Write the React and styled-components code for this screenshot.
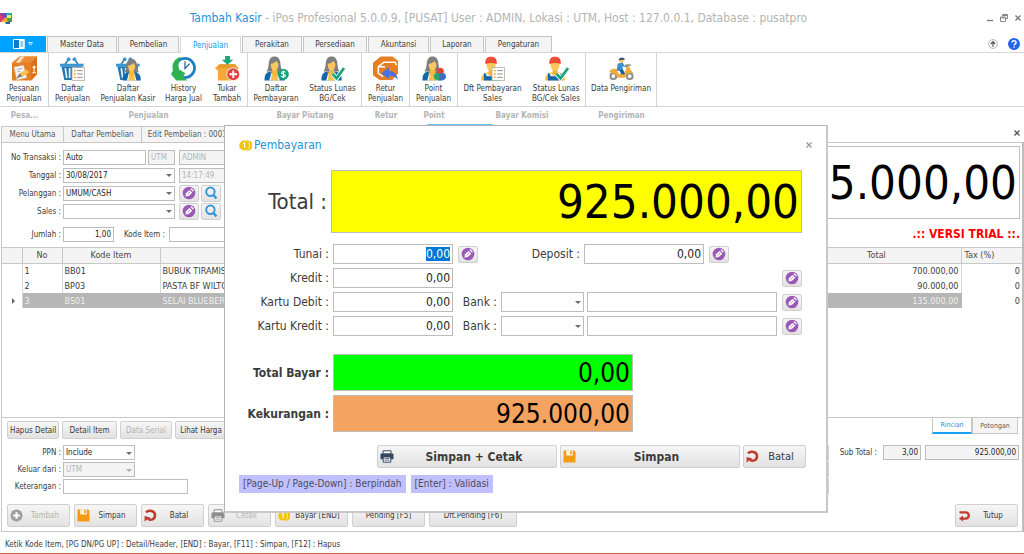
import React, { useEffect, useRef } from "react";
import styled, { createGlobalStyle } from "styled-components";

const GlobalStyle = createGlobalStyle`
    * {
        box-sizing: border-box;
    }
    body {
        margin: 0;
        background-color: #fff;
    }
    body, button, input, select {
        font-family: "DejaVu Sans Condensed", "Noto Sans", sans-serif;
        font-size: 8px;
        color: #3c3c3c;
    }
    input::selection {
        background-color: #0078d7;
        color: #fff;
    }
`;

const Window = styled.div`
    position: relative;
    display: flex;
    flex-direction: column;
    min-height: 100vh;
    border-bottom: 1px solid #cf6a50;
`;

/* title bar */
const TitleBar = styled.header`
    display: flex;
    align-items: center;
    height: 36px;
    & h1 {
        flex: 1;
        margin: 0;
        font-size: 12px;
        font-weight: normal;
        text-align: center;
        color: #b4b4b4;
    }
    & h1 b {
        font-weight: normal;
        color: #1b95dc;
    }
`;
const WindowButtons = styled.div`
    display: flex;
    gap: 4px;
    padding-right: 1px;
`;
const PlainButton = styled.button`
    display: flex;
    align-items: center;
    justify-content: center;
    width: 10px;
    height: 10px;
    padding: 0;
    border: 0;
    background: none;
    & svg {
        flex: none;
    }
`;

/* ribbon */
const RibbonTabs = styled.nav`
    display: flex;
    gap: 1px;
    height: 16px;
`;
const FileButton = styled.button`
    display: flex;
    align-items: center;
    justify-content: center;
    gap: 3px;
    width: 46px;
    padding: 0;
    border: 0;
    background-color: #00a2ff;
`;
const RibbonTab = styled.button`
    position: relative;
    z-index: 1;
    width: ${(p) => p.$w}px;
    height: ${(p) => (p.$active ? 17 : 16)}px;
    padding: 0;
    border: 1px solid ${(p) => (p.$active ? "#d8d8d8" : "#c4c4c4")};
    border-bottom: 0;
    background-color: ${(p) => (p.$active ? "#fff" : "#f4f4f4")};
    color: ${(p) => (p.$active ? "#1b95dc" : "#3c3c3c")};
`;
const RibbonTools = styled.div`
    display: flex;
    align-items: center;
    gap: 11px;
    margin-left: auto;
    padding-right: 5px;
`;
const Ribbon = styled.div`
    display: flex;
    height: 72px;
`;
const RibbonGroup = styled.section`
    & h2 {
        margin: 0;
        font-size: 8px;
        line-height: 18px;
        text-align: center;
        color: #b4b4b4;
    }
`;
const RibbonItems = styled.div`
    display: flex;
    height: 55px;
    padding-top: 3px;
    border: solid #d4d4d4;
    border-width: 1px 1px 1px 0;
`;
const RibbonRest = styled.div`
    flex: 1;
    height: 55px;
    border: solid #d4d4d4;
    border-width: 1px 0;
`;
const RibbonItem = styled.button`
    display: flex;
    flex-direction: column;
    align-items: center;
    width: ${(p) => p.$w}px;
    padding: 0;
    border: 0;
    background: none;
    line-height: 10px;
    white-space: pre;
    & svg {
        width: 25px;
        height: 25px;
        margin-bottom: 3px;
    }
`;

/* opened documents */
const DocTabs = styled.nav`
    display: flex;
    align-items: flex-end;
    height: 18px;
    padding-left: 1px;
    & > button:last-child {
        align-self: center;
        margin: 0 2px 0 auto;
    }
`;
const DocTab = styled.button`
    width: ${(p) => p.$w}px;
    height: ${(p) => (p.$active ? 18 : 16)}px;
    margin-right: -1px;
    padding: 0;
    border: 1px solid #c8c8c8;
    border-bottom: 0;
    ${(p) => p.$active && "border-top: 2px solid #5fbcf5;"}
    background-color: ${(p) => (p.$active ? "#fff" : "#f4f4f4")};
    color: #5a5a5a;
`;
const Page = styled.main`
    flex: 1;
    display: flex;
    flex-direction: column;
    margin-left: 1px;
    border: 1px solid #c8c8c8;
    border-right: 2px solid #bdbdbd;
`;
const PageTop = styled.div`
    display: flex;
    justify-content: space-between;
    height: 104px;
`;
const Fields = styled.div`
    display: flex;
    flex-direction: column;
    padding-top: ${(p) => p.$top || 0}px;
`;
const FieldRow = styled.div`
    display: flex;
    align-items: center;
    gap: 2px;
    height: ${(p) => p.$h || 18}px;
    margin-top: ${(p) => p.$top || 0}px;
    & > label:first-child {
        width: ${(p) => p.$label || 59}px;
        text-align: right;
        white-space: nowrap;
    }
`;
const TextBox = styled.input`
    width: ${(p) => p.$w}px;
    min-width: 0;
    height: ${(p) => p.$h || 15}px;
    margin-left: ${(p) => p.$left || 0}px;
    padding: 0 2px;
    border: 1px solid #bdbdbd;
    border-radius: 0;
    outline: 0;
    background-color: ${(p) => p.$bg || "#fff"};
    font-size: ${(p) => p.$size || 8}px;
    text-align: ${(p) => p.$align || "left"};
    color: ${(p) => p.$color || "#1e1e1e"};
`;
const SelectWrap = styled.span`
    position: relative;
    display: inline-flex;
    width: ${(p) => p.$w}px;
    height: ${(p) => p.$h || 15}px;
    &::after {
        content: "";
        position: absolute;
        right: 3px;
        top: 50%;
        margin-top: -1px;
        border: 3px solid transparent;
        border-top-color: ${(p) => (p.$off ? "#b0b0b0" : "#6e6e6e")};
        border-bottom: 0;
    }
    & select {
        width: 100%;
        padding: 0 2px;
        border: 1px solid #bdbdbd;
        border-radius: 0;
        appearance: none;
        background-color: ${(p) => (p.$off ? "#f4f4f4" : "#fff")};
        color: ${(p) => (p.$off ? "#b4b4b4" : "#1e1e1e")};
        opacity: 1;
    }
`;
const Button = styled.button`
    display: flex;
    align-items: center;
    width: ${(p) => p.$w}px;
    height: ${(p) => p.$h}px;
    padding: 0 2px;
    border: 1px solid #d0d0d0;
    border-radius: 2px;
    background: linear-gradient(#f6f6f6, #e2e2e2);
    font-size: ${(p) => p.$size || 8}px;
    font-weight: ${(p) => (p.$bold ? "bold" : "normal")};
    color: #3c3c3c;
    white-space: nowrap;
    & svg {
        flex: none;
    }
    & span {
        flex: 1;
        text-align: center;
    }
    &:disabled {
        color: #b4b4b4;
    }
`;
const BigTotal = styled.div`
    display: flex;
    flex-direction: column;
    align-items: flex-end;
    padding: 3px 2px 0 0;
    & strong {
        margin-top: 8px;
        font-size: 12px;
        color: #f00;
    }
`;

/* item table */
const TableBox = styled.div`
    flex: 1;
    min-height: 170px;
    border: solid #c8c8c8;
    border-width: 1px 0;
`;
const ItemTable = styled.table`
    width: 100%;
    table-layout: fixed;
    border-collapse: collapse;
    font-size: 9px;
    & th {
        height: 15px;
        padding: 0;
        border-right: 1px solid #c8c8c8;
        border-bottom: 1px solid #c8c8c8;
        background-color: #f4f4f4;
        font-weight: normal;
        color: #4a4a4a;
    }
    & th:last-child {
        padding-left: 3px;
        border-right: 0;
        text-align: left;
    }
    & td {
        height: 15px;
        padding: 0 2px;
        border-right: 1px solid #d8d8d8;
        overflow: hidden;
        white-space: nowrap;
    }
    & td:nth-last-child(-n + 2) {
        text-align: right;
    }
    & td:last-child {
        padding: 0 2px 0 0;
        border-right: 0;
    }
    & tr[aria-selected="true"] td:not(:first-child):not(:last-child) {
        background-color: #b6b6b6;
        border-right-color: #b6b6b6;
        color: #f0f0f0;
    }
`;

/* page footer */
const ButtonRow = styled.div`
    display: flex;
    gap: ${(p) => p.$gap || 3}px;
    padding: 0 4px 0 5px;
    & > :last-child {
        margin-left: auto;
    }
`;
const FooterTabs = styled.div`
    display: flex;
    align-self: flex-start;
`;
const FooterTab = styled.button`
    width: ${(p) => p.$w}px;
    height: 16px;
    padding: 0;
    border: solid #c8c8c8;
    border-width: 0 1px 1px;
    ${(p) => p.$active && "border-bottom: 2px solid #1ba1f2;"}
    background-color: ${(p) => (p.$active ? "#fff" : "#f4f4f4")};
    font-size: 7px;
    color: ${(p) => (p.$active ? "#1b95dc" : "#5a5a5a")};
`;
const PageBottom = styled.div`
    display: flex;
    justify-content: space-between;
    margin: 5px 0 9px;
`;
const SideTotals = styled.div`
    display: flex;
    gap: 10px;
    padding-right: 3px;
`;
const SideButtons = styled.div`
    display: flex;
    flex-direction: column;
`;
const StatusBar = styled.footer`
    height: 21px;
    padding-left: 5px;
    line-height: 25px;
`;

/* payment dialog */
const Dialog = styled.div`
    position: absolute;
    left: 224px;
    top: 125px;
    z-index: 2;
    width: 604px;
    padding: 0 24px 18px 14px;
    border: 1px solid #b4b4b4;
    border-right: 2px solid #c8c8c8;
    border-bottom: 2px solid #c8c8c8;
    background-color: #fff;
`;
const DialogTitle = styled.div`
    display: flex;
    align-items: center;
    gap: 2px;
    height: 38px;
    & h2 {
        flex: 1;
        margin: 0;
        font-size: 12px;
        font-weight: normal;
        color: #1b95dc;
    }
    & button {
        margin-right: -12px;
    }
`;
const PayRow = styled.div`
    display: flex;
    align-items: center;
    height: ${(p) => p.$h || 20}px;
    margin-top: ${(p) => p.$top || 4}px;
    font-size: 12px;
    & > label:first-child {
        flex: none;
        width: ${(p) => (p.$total ? 88 : 90)}px;
        margin-right: 4px;
        font-size: ${(p) => (p.$total ? 22 : 12)}px;
        font-weight: ${(p) => (p.$bold ? "bold" : "normal")};
        text-align: right;
        white-space: nowrap;
    }
    & > input {
        flex: ${(p) => (p.$total ? 1 : "none")};
    }
    & > button {
        margin-left: ${(p) => (p.$push ? "auto" : "5px")};
    }
`;
const PayLabel = styled.label`
    width: ${(p) => p.$w}px;
    margin-right: ${(p) => p.$right || 4}px;
    text-align: right;
`;
const DialogButtons = styled.div`
    display: flex;
    justify-content: flex-end;
    gap: 3px;
    margin: 13px -4px 0 0;
`;
const Hints = styled.div`
    display: flex;
    gap: 5px;
    margin-top: 7px;
    & span {
        padding: 0 4px;
        background-color: #c0c0ff;
        font-size: 10px;
        line-height: 18px;
        color: #4c4c5c;
    }
`;

/* small icons */
const Cross = ({ size = 6, color = "#777" }) => (
    <svg width={size} height={size} viewBox="0 0 6 6" aria-hidden="true">
        <path d="M.5.5l5 5M5.5.5l-5 5" stroke={color} strokeWidth="1.3" />
    </svg>
);
const Logo = () => (
    <svg width="12" height="11" viewBox="0 0 12 11" aria-hidden="true">
        <path d="M0 0h12v9H0z" fill="#8b3fa8" />
        <path d="M6 0h6v4l-5 3z" fill="#19a8c4" />
        <path d="M0 1l5 5-2 3H0z" fill="#e23a77" />
        <path d="M1 9l5-5 3 5z" fill="#f5b31c" />
        <path d="M7 6l5-3v5l-4 1z" fill="#4a9c4e" />
        <path d="M7 2h4v3H7z" fill="#e6f26a" />
        <path d="M5 9h5v2H6z" fill="#2d5ca8" />
    </svg>
);
const Tag = () => (
    <svg width="14" height="14" viewBox="0 0 14 14" aria-hidden="true">
        <circle cx="7" cy="7" r="6.3" fill="#9b59b6" />
        <path d="M3.4 10.4L4 7.2l3.4-3.3 2.8 2.8-3.4 3.4z" fill="#fff" />
        <path d="M8.3 3l1.2-.8L11.800 4.500l-.8 1.200z" fill="#fff" />
        <path d="M5.400 8.500L8 6" stroke="#9b59b6" strokeWidth=".7" />
    </svg>
);
const Magnifier = () => (
    <svg width="14" height="14" viewBox="0 0 14 14" aria-hidden="true">
        <circle cx="6.4" cy="5.8" r="4.2" fill="none" stroke="#3498db" strokeWidth="2" />
        <path d="M9.4 9l3 3.4" stroke="#3498db" strokeWidth="2.4" />
    </svg>
);
const Coins = ({ size = 12 }) => (
    <svg width={size} height={size} viewBox="0 0 12 12" aria-hidden="true">
        <path d="M7 1.5a4.6 4.6 0 010 9M9 2a4.2 4.2 0 010 8" fill="none" stroke="#f1c40f" strokeWidth="1.2" />
        <circle cx="4.8" cy="6" r="4.6" fill="#f1c40f" />
        <path d="M3.7 4.4l1.4-.7v4.6" fill="none" stroke="#fff" strokeWidth="1.1" />
    </svg>
);
const Disk = () => (
    <svg width="13" height="13" viewBox="0 0 13 13" aria-hidden="true">
        <path d="M.5.5h10.700l1.300 1.300v10.700H.5z" fill="#f39c12" />
        <path d="M3.2.5h6.600v5H3.200z" fill="#fdf3e0" />
        <path d="M7.200 1.300h1.700v3H7.200z" fill="#f39c12" />
    </svg>
);
const Undo = () => (
    <svg width="13" height="13" viewBox="0 0 13 13" aria-hidden="true">
        <path d="M2 3.400C5 .4 11 1.600 11 6.300c0 4.400-4.400 5.400-7 3.500" fill="none" stroke="#c0392b" strokeWidth="2.600" />
        <path d="M.6 12.400V7l5.600 1.600-3 1.800z" fill="#c0392b" />
    </svg>
);
const Exit = () => (
    <svg width="13" height="13" viewBox="0 0 13 13" aria-hidden="true">
        <path d="M1.500 3.400h6.200a3.100 3.100 0 010 6.200H4" fill="none" stroke="#c0392b" strokeWidth="2.400" />
        <path d="M5 6.500v6L1 9.500z" fill="#c0392b" />
    </svg>
);
const Plus = () => (
    <svg width="13" height="13" viewBox="0 0 13 13" aria-hidden="true">
        <circle cx="6.5" cy="6.5" r="6" fill="#9e9e9e" />
        <path d="M6.5 3.2v6.6M3.2 6.5h6.6" stroke="#fff" strokeWidth="2" />
    </svg>
);
const Printer = ({ color = "#34495e" }) => (
    <svg width="14" height="13" viewBox="0 0 14 13" aria-hidden="true">
        <path d="M3 .8h8V4H3z" fill="#fff" stroke={color} />
        <path d="M1.5 3.6h11a1 1 0 011 1v4.6h-13V4.6a1 1 0 011-1z" fill={color} />
        <path d="M3.2 7h7.6v5.2H3.2z" fill="#fff" stroke={color} />
        <path d="M4.5 8.6h5M4.5 10.2h5" stroke={color} strokeWidth=".8" />
    </svg>
);

/* ribbon icon parts, all on a 26 x 26 grid */
const Icon = ({ children }) => (
    <svg viewBox="0 0 26 26" aria-hidden="true">{children}</svg>
);
const Woman = ({ x = 0 }) => (
    <g transform={`translate(${x} 0)`}>
        <path d="M3.5 16c2-2 2-5 2.500-9C6.500 2.500 9 .5 12 .5s5.500 2 6 6.500c.5 4 .5 7 2.500 9z" fill="#7f7f7f" />
        <path d="M1.5 25.500c0-5 1-8 5-9h11c4 1 5 4 5 9z" fill="#1268ab" />
        <path d="M9.500 13h5v4l2 .5-4.500 7-4.500-7 2-.5z" fill="#f6b73c" />
        <path d="M8 8c2 .2 4.500-.8 6-3 .4 1.500 1.200 2.300 2 2.800.2 4-1.500 7.400-4 7.400S8 12 8 8z" fill="#fcc75c" />
        <path d="M8.500 18l3.500 5 3.500-5 2 7.500h-11z" fill="#fff" />
        <path d="M9 18l3 4 3-4 .8 7.500H8.200z" fill="#f8c04e" />
    </g>
);
const Man = () => (
    <g>
        <path d="M1 25.500c0-5 3-7.500 7-8.500h7c4 1 7 3.500 7 8.500z" fill="#fbc04d" />
        <path d="M9 13h5v5l-2.500 2L9 18z" fill="#f3ae36" />
        <path d="M6 17.500l5.500 4 5.500-4 1 8H5z" fill="#eef3f8" />
        <path d="M5.500 17.600l1.500 3.400h9l1.500-3.400 1.500.6v7.300H4v-7.300z" fill="#1268ab" />
        <path d="M6.800 7h9.400c.6 4-1.400 8.500-4.700 8.500S6.200 11 6.800 7z" fill="#fcc75c" />
        <path d="M5.600 8.400C5 3.500 7 .8 11.500.8s6.500 2.700 5.900 7.600c-3.700-1.400-8.100-1.400-11.800 0z" fill="#ef4b37" />
    </g>
);
const Basket = () => (
    <g>
        <path d="M5 9l5-7M19 9l-5-7" stroke="#2b6f9e" strokeWidth="1.6" />
        <circle cx="9" cy="3.500" r="2" fill="#3b97d3" />
        <circle cx="15" cy="3.500" r="2" fill="#3b97d3" />
        <path d="M0 8h24.500v3H0z" fill="#3b97d3" />
        <path d="M1.500 11H23l-2.500 14h-16z" fill="#1f75ad" />
        <path d="M5.500 12.500l1.500 10.500M10 12.500v10.500M14.500 12.500v10.500M19 12.500L17.500 23" stroke="#e3f1fa" strokeWidth="1.8" />
    </g>
);
const List = () => (
    <g>
        <path d="M12.500 12h13v13.500h-13z" fill="#fffdf8" stroke="#a9a9a9" strokeWidth=".8" />
        <path d="M14.500 15.200h1.800M14.500 18.700h1.800M14.500 22.200h1.800" stroke="#f39c12" strokeWidth="1.4" />
        <path d="M17.800 15.200h5.700M17.800 18.700h5.700M17.800 22.200h5.700" stroke="#8c8c8c" />
    </g>
);
const Tick = () => (
    <g fill="none">
        <path d="M13 18.500l4.200 5L24.500 13" stroke="#fff" strokeWidth="4.5" />
        <path d="M13 18.500l4.200 4.800L25 12.500" stroke="#16a678" strokeWidth="2.8" />
    </g>
);
const OrderIcon = () => (
    <Icon>
        <path d="M0 7L8 .5h18v18.500l-6 6.500H0z" fill="#e67e22" />
        <path d="M0 7L8 .5h18L20 7z" fill="#ee8b34" />
        <path d="M20 7l6-6.500V19l-6 6.500z" fill="#d9701a" />
        <path d="M9 .5h4L8 7H4z" fill="#f9e0c4" />
        <path d="M23 16.500V11M21.500 12.500L23 10.500l1.500 1.500M21 17.500h4" stroke="#fff" strokeWidth="1.1" fill="none" />
        <path d="M2 11.500l10-2 3.500 13L5 25z" fill="#f3f3f3" stroke="#c4b8ab" strokeWidth=".6" />
        <path d="M5 14l5.500-1M5.500 16.500l3-.6" stroke="#aaa" />
        <path d="M6 22l2-4 7-4 3 3-8 5z" fill="#fbc04d" />
        <path d="M4.500 23.500L8 18l2.500 3z" fill="#7b7b7b" />
    </Icon>
);
const BasketListIcon = () => <Icon><Basket /><List /></Icon>;
const BasketWomanIcon = () => (
    <Icon>
        <Basket />
        <g transform="translate(5.5 2.6) scale(.9)"><Woman /></g>
    </Icon>
);
const HistoryIcon = () => (
    <Icon>
        <circle cx="14.500" cy="12.500" r="10" fill="#fff" stroke="#1d7fc4" strokeWidth="2.8" />
        <path d="M14.500 5.500V13l5-5" fill="none" stroke="#1c5f96" strokeWidth="1.200" />
        <path d="M10 .8C3 3 .5 9 2 15L0 19l5.500 6.500H17L12.500 21l2.500-3-6.500-4C7 10 8 6 10 .8z" fill="#2eb053" />
    </Icon>
);
const SwapIcon = () => (
    <Icon>
        <path d="M0 13l4-4.500h17L25 13l-3 2v10.500H3V15z" fill="#f6a93b" />
        <path d="M5 8.500h16l2 4H3z" fill="#e9982c" />
        <path d="M10.500 0h5v4H19l-6 5L7 4h3.500z" fill="#1fa676" />
        <circle cx="19" cy="19" r="7" fill="#fff" />
        <circle cx="19" cy="19" r="6.300" fill="#e2413c" />
        <path d="M19 15v8M15 19h8" stroke="#fff" strokeWidth="2" />
    </Icon>
);
const WomanMoneyIcon = () => (
    <Icon>
        <Woman x={-1} />
        <circle cx="20" cy="19" r="5.800" fill="#14a37a" />
        <path d="M22.300 17c-.8-1.200-4-1.200-4 .4 0 2 4 1.200 4 3.200 0 1.700-3.500 1.700-4.500.2M20.200 15v8" fill="none" stroke="#fff" strokeWidth="1.100" />
    </Icon>
);
const WomanCheckIcon = () => <Icon><Woman /><Tick /></Icon>;
const ReturnIcon = () => (
    <Icon>
        <path d="M0 7l8-6.500h12L26 5v13l-6 7H7l-7-5z" fill="#e67e22" />
        <path d="M5.500 11l6-4.500h11.500l1.500 3M5.500 11v7l5 3.500M5.500 11l7 .5" fill="none" stroke="#fff" strokeWidth="1.500" />
        <path d="M8.500 18l8-6v3.500c5 0 8.500 3 9.500 9.500-2.500-3.500-5-4.500-9.500-4.500V24z" fill="#4a6fe8" />
    </Icon>
);
const PointIcon = () => (
    <Icon>
        <Woman />
        <circle cx="20" cy="16" r="3.700" fill="#e04438" />
        <circle cx="17" cy="21.300" r="3.700" fill="#2fa36b" />
        <circle cx="22.300" cy="21.300" r="3.700" fill="#3a73c4" />
    </Icon>
);
const ManListIcon = () => <Icon><Man /><List /></Icon>;
const ManCheckIcon = () => <Icon><Man /><Tick /></Icon>;
const ScooterIcon = () => (
    <Icon>
        <circle cx="4.500" cy="21" r="3" fill="#fff" stroke="#8a8a8a" strokeWidth="2" />
        <circle cx="21.500" cy="21" r="3" fill="#fff" stroke="#8a8a8a" strokeWidth="2" />
        <path d="M0 17c1-3 4-4 8-3.500l2 5h5l3-5-1-5h3l2.500 6 3 3-6 .5-3 4.500H9c-1-3.500-5-4.500-9-5.500z" fill="#f0ab3c" />
        <path d="M18 9.500h5" stroke="#8a8a8a" strokeWidth="1.500" />
        <path d="M9 8l5-1.500 2 3.500 3 0v1.500l-5-.5.500 3 2 5h-3.500l-2-4L8 15z" fill="#3d8fcf" />
        <path d="M8.500 15l6-1 2 5H13l-1.500-3.500z" fill="#1b5f99" />
        <circle cx="13" cy="4.500" r="2.500" fill="#fcc75c" />
        <path d="M10 4.500C10 .5 16.500.5 16.500 4z" fill="#3c566e" />
    </Icon>
);

const ribbonTabs = [
    ["Master Data", 70], ["Pembelian", 61], ["Penjualan", 61], ["Perakitan", 60],
    ["Persediaan", 64], ["Akuntansi", 61], ["Laporan", 54], ["Pengaturan", 67],
];
const ribbonGroups = [
    { name: "Pesa...", items: [["Pesanan\nPenjualan", 48, OrderIcon]] },
    {
        name: "Penjualan",
        items: [
            ["Daftar\nPenjualan", 47, BasketListIcon],
            ["Daftar\nPenjualan Kasir", 64, BasketWomanIcon],
            ["History\nHarga Jual", 47, HistoryIcon],
            ["Tukar\nTambah", 40, SwapIcon],
        ],
    },
    { name: "Bayar Piutang", items: [["Daftar\nPembayaran", 56, WomanMoneyIcon], ["Status Lunas\nBG/Cek", 57, WomanCheckIcon]] },
    { name: "Retur", items: [["Retur\nPenjualan", 47, ReturnIcon]] },
    { name: "Point", items: [["Point\nPenjualan", 47, PointIcon]] },
    { name: "Bayar Komisi", items: [["Dft Pembayaran\nSales", 69, ManListIcon], ["Status Lunas\nBG/Cek Sales", 58, ManCheckIcon]] },
    { name: "Pengiriman", items: [["Data Pengiriman", 70, ScooterIcon]] },
];
const rows = [
    { kode: "BB01", nama: "BUBUK TIRAMISU", total: "700.000,00" },
    { kode: "BP03", nama: "PASTA BF WILTON", total: "90.000,00" },
    { kode: "BS01", nama: "SELAI BLUEBERRY", total: "135.000,00", selected: true },
];

function Select({ id, value, w, h, disabled }) {
    return (
        <SelectWrap $w={w} $h={h} $off={disabled}>
            <select id={id} defaultValue={value} disabled={disabled}>
                <option>{value}</option>
            </select>
        </SelectWrap>
    );
}

function TagButton() {
    return <Button $w={20} $h={17} aria-label="Tag"><Tag /></Button>;
}

function LockedBox({ label, value, w, left }) {
    return <TextBox aria-label={label} disabled value={value} $w={w} $left={left} $bg="#f4f4f4" $color="#b4b4b4" />;
}

function AmountBox({ id, inputRef }) {
    return <TextBox id={id} ref={inputRef} defaultValue="0,00" $w={120} $h={20} $size={12} $align="right" />;
}

function PaymentDialog() {
    const tunai = useRef(null);
    useEffect(() => {
        tunai.current.focus();
        tunai.current.select();
    }, []);

    return (
        <Dialog role="dialog" aria-labelledby="pay-title">
            <DialogTitle>
                <Coins size={13} />
                <h2 id="pay-title">Pembayaran</h2>
                <PlainButton aria-label="Tutup"><Cross color="#999" /></PlainButton>
            </DialogTitle>
            <PayRow $h={63} $top={6} $total>
                <label htmlFor="total">Total :</label>
                <TextBox id="total" readOnly value="925.000,00" $h={63} $size={47} $align="right" $bg="#ff0" $color="#000" />
            </PayRow>
            <PayRow $top={11}>
                <label htmlFor="tunai">Tunai :</label>
                <AmountBox id="tunai" inputRef={tunai} />
                <TagButton />
                <PayLabel htmlFor="deposit" $w={102}>Deposit :</PayLabel>
                <AmountBox id="deposit" />
                <TagButton />
            </PayRow>
            <PayRow $push>
                <label htmlFor="kredit">Kredit :</label>
                <AmountBox id="kredit" />
                <TagButton />
            </PayRow>
            {["Debit", "Kredit"].map((kind) => (
                <PayRow key={kind}>
                    <label htmlFor={"kartu" + kind}>Kartu {kind} :</label>
                    <AmountBox id={"kartu" + kind} />
                    <PayLabel htmlFor={"bank" + kind} $w={44}>Bank :</PayLabel>
                    <Select id={"bank" + kind} value="" w={83} h={20} />
                    <TextBox aria-label={"No Kartu " + kind} $w={190} $h={20} $size={12} $left={3} />
                    <TagButton />
                </PayRow>
            ))}
            <PayRow $h={37} $top={18} $bold>
                <label htmlFor="bayar">Total Bayar :</label>
                <TextBox id="bayar" readOnly value="0,00" $w={300} $h={37} $size={26} $align="right" $bg="#0f0" $color="#000" />
            </PayRow>
            <PayRow $h={37} $bold>
                <label htmlFor="kurang">Kekurangan :</label>
                <TextBox id="kurang" readOnly value="925.000,00" $w={300} $h={37} $size={26} $align="right" $bg="#f4a460" $color="#000" />
            </PayRow>
            <DialogButtons>
                <Button $w={180} $h={23} $size={12} $bold><Printer /><span>Simpan + Cetak</span></Button>
                <Button $w={180} $h={23} $size={12} $bold><Disk /><span>Simpan</span></Button>
                <Button $w={63} $h={23} $size={11}><Undo /><span>Batal</span></Button>
            </DialogButtons>
            <Hints>
                <span>[Page-Up / Page-Down] : Berpindah</span>
                <span>[Enter] : Validasi</span>
            </Hints>
        </Dialog>
    );
}

export default function App() {
    return (
        <Window>
            <GlobalStyle />
            <TitleBar>
                <Logo />
                <h1><b>Tambah Kasir</b> - iPos Profesional 5.0.0.9, [PUSAT] User : ADMIN, Lokasi : UTM, Host : 127.0.0.1, Database : pusatpro</h1>
                <WindowButtons>
                    <PlainButton aria-label="Minimize">
                        <svg width="6" height="8" viewBox="0 0 6 8"><path d="M0 6.500h6" stroke="#777" strokeWidth="1.300" /></svg>
                    </PlainButton>
                    <PlainButton aria-label="Restore">
                        <svg width="8" height="8" viewBox="0 0 8 8" fill="none" stroke="#888"><path d="M2.500 2.500v-2h5v4h-2M2.500 1.500h5M.5 3h5v4.500h-5zM.5 4h5" /></svg>
                    </PlainButton>
                    <PlainButton aria-label="Close"><Cross /></PlainButton>
                </WindowButtons>
            </TitleBar>
            <RibbonTabs>
                <FileButton aria-label="Menu">
                    <svg width="12" height="10" viewBox="0 0 12 10"><path d="M.5.5h10.500v9H.5z" fill="#0b7dc8" stroke="#fff" /><path d="M6 0h5.500v10H6z" fill="#fff" /><path d="M7.300 3h3M7.300 5h3M7.300 7h3" stroke="#0b7dc8" strokeWidth=".8" /></svg>
                    <svg width="5" height="4" viewBox="0 0 5 4"><path d="M.5.5h4l-2 2.700z" fill="none" stroke="#fff" strokeWidth=".8" /></svg>
                </FileButton>
                {ribbonTabs.map(([name, w]) => (
                    <RibbonTab key={name} $w={w} $active={name === "Penjualan"}>{name}</RibbonTab>
                ))}
                <RibbonTools>
                    <PlainButton aria-label="Collapse">
                        <svg width="10" height="10" viewBox="0 0 10 10" fill="none"><circle cx="5" cy="5" r="4.400" stroke="#a8a8a8" strokeWidth=".8" /><path d="M5 7.800V3M2.800 5L5 2.700 7.200 5" stroke="#555" strokeWidth="1.200" /></svg>
                    </PlainButton>
                    <PlainButton aria-label="Help">
                        <svg width="12" height="12" viewBox="0 0 12 12"><circle cx="6" cy="6" r="6" fill="#2563eb" /><path d="M4 4.600c0-2.600 4.200-2.400 4.100 0C8 6 6.100 5.900 6.100 7.500M6.100 8.500v1.300" fill="none" stroke="#fff" strokeWidth="1.400" /></svg>
                    </PlainButton>
                </RibbonTools>
            </RibbonTabs>
            <Ribbon>
                {ribbonGroups.map((group) => (
                    <RibbonGroup key={group.name}>
                        <RibbonItems>
                            {group.items.map(([label, w, Pic]) => (
                                <RibbonItem key={label} $w={w}><Pic />{label}</RibbonItem>
                            ))}
                        </RibbonItems>
                        <h2>{group.name}</h2>
                    </RibbonGroup>
                ))}
                <RibbonRest />
            </Ribbon>
            <DocTabs>
                <DocTab $w={63}>Menu Utama</DocTab>
                <DocTab $w={79}>Daftar Pembelian</DocTab>
                <DocTab $w={143}>Edit Pembelian : 0001/BL/UTM/0817</DocTab>
                <DocTab $w={145}>Daftar Penjualan Kasir</DocTab>
                <DocTab $w={66} $active>Tambah Kasir</DocTab>
                <PlainButton aria-label="Tutup halaman"><Cross color="#555" /></PlainButton>
            </DocTabs>
            <Page>
                <PageTop>
                    <Fields $top={5}>
                        <FieldRow>
                            <label htmlFor="no">No Transaksi :</label>
                            <TextBox id="no" defaultValue="Auto" $w={83} />
                            <LockedBox label="Lokasi" value="UTM" w={27} />
                            <LockedBox label="User" value="ADMIN" w={70} left={2} />
                        </FieldRow>
                        <FieldRow>
                            <label htmlFor="tanggal">Tanggal :</label>
                            <Select id="tanggal" value="30/08/2017" w={112} />
                            <LockedBox label="Jam" value="14:17:49" w={70} left={2} />
                        </FieldRow>
                        {[["Pelanggan", "UMUM/CASH"], ["Sales", ""]].map(([name, value]) => (
                            <FieldRow key={name}>
                                <label htmlFor={name}>{name} :</label>
                                <Select id={name} value={value} w={112} />
                                <span />
                                <TagButton />
                                <Button $w={20} $h={17} aria-label="Cari"><Magnifier /></Button>
                            </FieldRow>
                        ))}
                        <FieldRow $top={5}>
                            <label htmlFor="jumlah">Jumlah :</label>
                            <TextBox id="jumlah" defaultValue="1,00" $w={51} $align="right" />
                            <PayLabel htmlFor="kode" $w={49} $right={2}>Kode Item :</PayLabel>
                            <TextBox id="kode" $w={120} />
                        </FieldRow>
                    </Fields>
                    <BigTotal>
                        <TextBox aria-label="Total transaksi" readOnly value="925.000,00" $w={400} $h={73} $size={47} $align="right" $color="#000" />
                        <strong>.:: VERSI TRIAL ::.</strong>
                    </BigTotal>
                </PageTop>
                <TableBox>
                    <ItemTable>
                        <colgroup>
                            <col style={{ width: 20 }} />
                            <col style={{ width: 40 }} />
                            <col style={{ width: 98 }} />
                            <col />
                            <col style={{ width: 169 }} />
                            <col style={{ width: 61 }} />
                        </colgroup>
                        <thead>
                            <tr>
                                <th aria-label="Penanda" />
                                <th>No</th>
                                <th>Kode Item</th>
                                <th>Nama Item</th>
                                <th>Total</th>
                                <th>Tax (%)</th>
                            </tr>
                        </thead>
                        <tbody>
                            {rows.map((row, i) => (
                                <tr key={row.kode} aria-selected={!!row.selected}>
                                    <td>
                                        {row.selected && <svg width="16" height="6" viewBox="0 0 16 6"><path d="M8 0v6l3-3z" fill="#666" /></svg>}
                                    </td>
                                    <td>{i + 1}</td>
                                    <td>{row.kode}</td>
                                    <td>{row.nama}</td>
                                    <td>{row.total}</td>
                                    <td>0</td>
                                </tr>
                            ))}
                        </tbody>
                    </ItemTable>
                </TableBox>
                <ButtonRow>
                    <Fields $top={3}><Button $w={52} $h={18}><span>Hapus Detail</span></Button></Fields>
                    <Fields $top={3}><Button $w={55} $h={18}><span>Detail Item</span></Button></Fields>
                    <Fields $top={3}><Button $w={52} $h={18} disabled><span>Data Serial</span></Button></Fields>
                    <Fields $top={3}><Button $w={52} $h={18}><span>Lihat Harga</span></Button></Fields>
                    <FooterTabs>
                        <FooterTab $w={40} $active>Rincian</FooterTab>
                        <FooterTab $w={46}>Potongan</FooterTab>
                    </FooterTabs>
                </ButtonRow>
                <PageBottom>
                    <Fields>
                        <FieldRow $h={17}>
                            <label htmlFor="ppn">PPN :</label>
                            <Select id="ppn" value="Include" w={72} />
                        </FieldRow>
                        <FieldRow $h={17}>
                            <label htmlFor="keluar">Keluar dari :</label>
                            <Select id="keluar" value="UTM" w={72} disabled />
                        </FieldRow>
                        <FieldRow $h={17}>
                            <label htmlFor="ket">Keterangan :</label>
                            <TextBox id="ket" $w={125} />
                        </FieldRow>
                    </Fields>
                    <SideTotals>
                        <SideButtons>
                            <TagButton />
                            <TagButton />
                            <TagButton />
                        </SideButtons>
                        <FieldRow $h={17} $label={38}>
                            <PayLabel htmlFor="qty">Sub Total :</PayLabel>
                            <TextBox id="qty" readOnly value="3,00" $w={38} $align="right" $bg="#f4f4f4" />
                            <TextBox aria-label="Sub total" readOnly value="925.000,00" $w={94} $left={2} $align="right" $bg="#f4f4f4" />
                        </FieldRow>
                    </SideTotals>
                </PageBottom>
                <ButtonRow $gap={4}>
                    <Button $w={63} $h={23} disabled><Plus /><span>Tambah</span></Button>
                    <Button $w={63} $h={23}><Disk /><span>Simpan</span></Button>
                    <Button $w={63} $h={23}><Undo /><span>Batal</span></Button>
                    <Button $w={63} $h={23} disabled><Printer color="#8e8e8e" /><span>Cetak</span></Button>
                    <Button $w={73} $h={23}><Coins /><span>Bayar [END]</span></Button>
                    <Button $w={73} $h={23}><span>Pending [F5]</span></Button>
                    <Button $w={88} $h={23}><span>Dft.Pending [F6]</span></Button>
                    <Fields>
                        <Button $w={63} $h={23}><Exit /><span>Tutup</span></Button>
                        <FieldRow $h={4} />
                    </Fields>
                </ButtonRow>
            </Page>
            <StatusBar>Ketik Kode Item, [PG DN/PG UP] : Detail/Header, [END] : Bayar, [F11] : Simpan, [F12] : Hapus</StatusBar>
            <PaymentDialog />
        </Window>
    );
}
